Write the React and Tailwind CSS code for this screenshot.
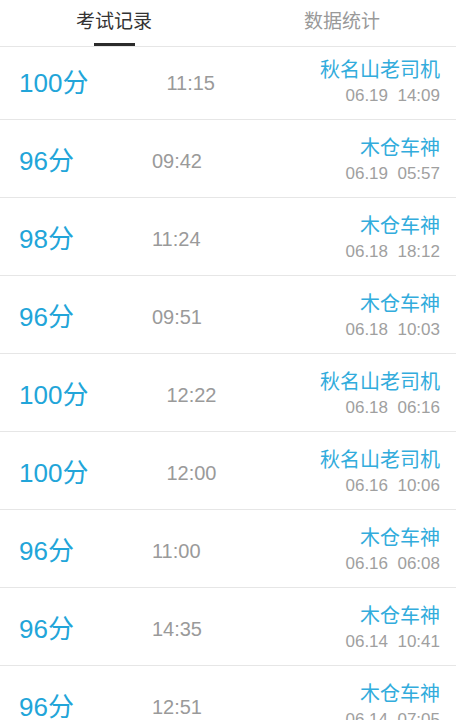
import React from "react";

const rows = [
  { score: "100", time: "11:15", name: "秋名山老司机", date: "06.19", clock: "14:09" },
  { score: "96", time: "09:42", name: "木仓车神", date: "06.19", clock: "05:57" },
  { score: "98", time: "11:24", name: "木仓车神", date: "06.18", clock: "18:12" },
  { score: "96", time: "09:51", name: "木仓车神", date: "06.18", clock: "10:03" },
  { score: "100", time: "12:22", name: "秋名山老司机", date: "06.18", clock: "06:16" },
  { score: "100", time: "12:00", name: "秋名山老司机", date: "06.16", clock: "10:06" },
  { score: "96", time: "11:00", name: "木仓车神", date: "06.16", clock: "06:08" },
  { score: "96", time: "14:35", name: "木仓车神", date: "06.14", clock: "10:41" },
  { score: "96", time: "12:51", name: "木仓车神", date: "06.14", clock: "07:05" },
];

export default function App() {
  return (
    <div className="w-[456px] h-[720px] overflow-hidden bg-white font-['Liberation_Sans','Noto_Sans_CJK_SC',sans-serif]">
      <div className="flex h-[47px] border-b border-[#e6e6e6]">
        <div className="flex-1 flex flex-col items-center">
          <div className="pt-[9px] h-[43px] text-[19px] leading-[26px] text-[#333333]">考试记录</div>
          <div className="w-[41px] h-[3px] bg-[#2b2b2b]"></div>
        </div>
        <div className="flex-1 flex flex-col items-center">
          <div className="pt-[9px] text-[19px] leading-[26px] text-[#999999]">数据统计</div>
        </div>
      </div>
      {rows.map((r, i) => (
        <div
          key={i}
          className={
            "flex items-center border-b border-[#e6e6e6] pl-[19px] pr-[16px] " +
            (i === 0 ? "h-[73px]" : "h-[78px] pt-[5px]")
          }
        >
          <div className="text-[26px] leading-[32px] text-[#22a5d9] flex items-baseline">
            <span>{r.score}</span>
            <span>分</span>
          </div>
          <div className="ml-[78px] text-[20px] leading-[26px] text-[#9a9a9a]">{r.time}</div>
          <div className="ml-auto flex flex-col items-end">
            <div className="text-[20px] leading-[26px] text-[#32acdc]">{r.name}</div>
            <div className="text-[17px] leading-[26px] text-[#a0a0a0] whitespace-pre">{r.date + "  " + r.clock}</div>
          </div>
        </div>
      ))}
    </div>
  );
}
